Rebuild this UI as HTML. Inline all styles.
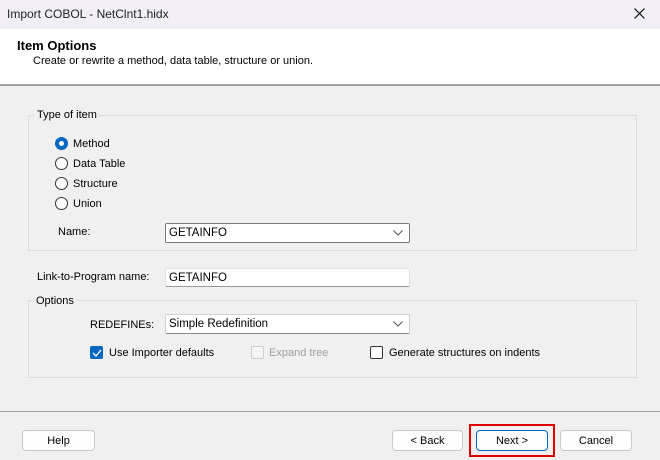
<!DOCTYPE html>
<html><head><style>
*{margin:0;padding:0;box-sizing:border-box}
body{width:660px;height:460px;background:#f0f0f0;font-family:"Liberation Sans",sans-serif;font-size:11px;color:#000;position:relative;overflow:hidden}
.a{position:absolute;white-space:nowrap}
.title{left:0;top:0;width:660px;height:29px;background:#f1eff5}
.hdr{left:0;top:29px;width:660px;height:57px;background:#fff;border-bottom:2px solid #a0a0a0}
.grp{border:1px solid #dcdcdc}
.lbl{background:#f0f0f0;padding:0 2px}
.radio{width:13px;height:13px;border:1px solid #333;border-radius:50%;background:#fff}
.radio.on{border:none;background:#0067c0}
.radio.on::after{content:"";position:absolute;left:4px;top:4px;width:5px;height:5px;border-radius:50%;background:#fff}
.box{background:#fff;border:1px solid #b0b0b0;border-bottom-color:#888;border-radius:2px;padding:3px 3px;height:20px;line-height:13px;font-size:11.5px}
.chev{position:absolute;right:6px;top:6px}
.btn{height:21px;border:1px solid #c8c8c8;border-radius:4px;background:#fdfdfd;text-align:center;line-height:20px}
.cb{width:13px;height:13px;border:1px solid #333;border-radius:2px;background:#fff}
</style></head><body>
<div class="a title"></div>
<div class="a" style="left:7px;top:7px;font-size:12px;color:#222">Import COBOL - NetClnt1.hidx</div>
<svg class="a" style="left:634px;top:8px" width="11" height="11"><path d="M0.5 0.5L10.5 10.5M10.5 0.5L0.5 10.5" stroke="#111" stroke-width="1.2"/></svg>
<div class="a hdr"></div>
<div class="a" style="left:17px;top:38px;font-weight:bold;font-size:13px">Item Options</div>
<div class="a" style="left:33px;top:55px">Create or rewrite a method, data table, structure or union.</div>

<div class="a grp" style="left:28px;top:115px;width:609px;height:136px"></div>
<div class="a lbl" style="left:35px;top:109px">Type of item</div>
<div class="a radio on" style="left:55px;top:137px"></div><div class="a" style="left:73px;top:138px">Method</div>
<div class="a radio" style="left:55px;top:157px"></div><div class="a" style="left:73px;top:158px">Data Table</div>
<div class="a radio" style="left:55px;top:177px"></div><div class="a" style="left:73px;top:178px">Structure</div>
<div class="a radio" style="left:55px;top:197px"></div><div class="a" style="left:73px;top:198px">Union</div>
<div class="a" style="left:58px;top:226px">Name:</div>
<div class="a box" style="left:165px;top:223px;width:245px;border-color:#7a7a7a">GETAINFO<svg class="chev" width="10" height="6"><path d="M0.5 0.5L5 5L9.5 0.5" fill="none" stroke="#555"/></svg></div>

<div class="a" style="left:37px;top:271px">Link-to-Program name:</div>
<div class="a box" style="left:165px;top:268px;width:245px;height:19px;border-color:#e0e0e0;border-bottom-color:#999">GETAINFO</div>

<div class="a grp" style="left:28px;top:300px;width:609px;height:78px"></div>
<div class="a lbl" style="left:34px;top:295px">Options</div>
<div class="a" style="left:90px;top:319px">REDEFINEs:</div>
<div class="a box" style="left:165px;top:314px;width:245px;border-color:#d0d0d0;border-bottom-color:#888">Simple Redefinition<svg class="chev" width="10" height="6"><path d="M0.5 0.5L5 5L9.5 0.5" fill="none" stroke="#555"/></svg></div>
<div class="a cb" style="left:90px;top:346px;background:#0067c0;border-color:#0067c0"><svg style="position:absolute;left:1px;top:2px" width="10" height="8"><path d="M1 4L4 7L9 1" fill="none" stroke="#fff" stroke-width="1.3"/></svg></div>
<div class="a" style="left:109px;top:347px">Use Importer defaults</div>
<div class="a cb" style="left:251px;top:346px;border-color:#ccc;background:#f5f5f5"></div>
<div class="a" style="left:269px;top:347px;color:#a0a0a0">Expand tree</div>
<div class="a cb" style="left:370px;top:346px"></div>
<div class="a" style="left:389px;top:347px">Generate structures on indents</div>

<div class="a" style="left:0;top:411px;width:660px;height:1px;background:#a0a0a0"></div>
<div class="a btn" style="left:22px;top:430px;width:73px">Help</div>
<div class="a btn" style="left:392px;top:430px;width:71px">&lt; Back</div>
<div class="a" style="left:469px;top:424px;width:86px;height:33px;border:2px solid #e00000"></div>
<div class="a btn" style="left:476px;top:430px;width:72px;border-color:#0067c0">Next &gt;</div>
<div class="a btn" style="left:560px;top:430px;width:72px">Cancel</div>
</body></html>
